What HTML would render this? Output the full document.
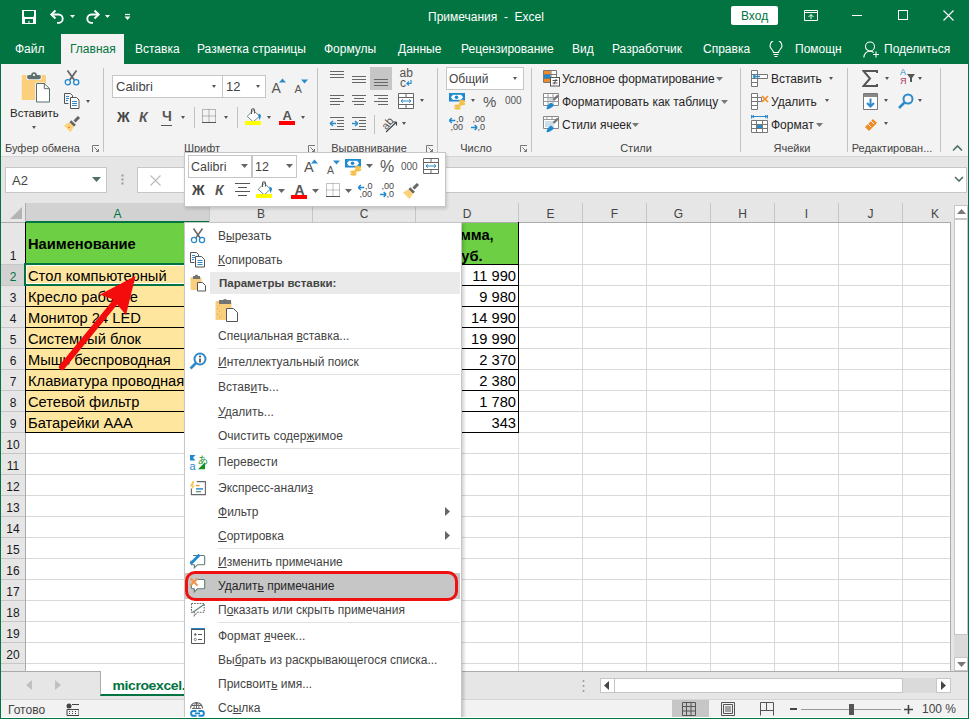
<!DOCTYPE html>
<html><head><meta charset="utf-8">
<style>
*{box-sizing:border-box;margin:0;padding:0}
html,body{width:969px;height:719px;overflow:hidden;background:#fff;font-family:"Liberation Sans",sans-serif;font-size:12px;color:#262626}
.a{position:absolute}
.t{position:absolute;white-space:pre;line-height:14px}
#title{left:0;top:0;width:969px;height:64px;background:#027442}
#ribbon{left:0;top:64px;width:969px;height:93px;background:#f3f3f3;border-bottom:1px solid #d5d5d5}
#fbar{left:0;top:157px;width:969px;height:46px;background:#e6e6e6}
.vsep{position:absolute;width:1px;background:#c2c2c2}
.tab{position:absolute;top:42px;color:#fff;white-space:pre;line-height:14px}
.lbl{position:absolute;top:141px;color:#444;white-space:pre;line-height:14px;font-size:11px;transform:translateX(-50%)}
.dd{position:absolute;width:0;height:0;border-left:2.5px solid transparent;border-right:2.5px solid transparent;border-top:3px solid #555}
#grid{left:0;top:203px;width:969px;height:468px;background:#fff}
.ch{position:absolute;top:203px;height:19px;background:#e6e6e6;border-right:1px solid #cfcfcf;border-bottom:1px solid #bdbdbd;text-align:center;line-height:19px;font-size:14px;color:#444}
.rhx{position:absolute;left:1px;width:24px;background:#e6e6e6;border-bottom:1px solid #cfcfcf;border-right:1px solid #bdbdbd;text-align:center;font-size:14px;color:#444}
.hl{position:absolute;height:1px;background:#d9d9d9}
.vl{position:absolute;width:1px;background:#d9d9d9}
.cell{position:absolute;font-size:14.7px;color:#000;white-space:pre}
#menu{left:184px;top:222px;width:278px;height:510px;background:#fff;border:1px solid #c6c6c6;box-shadow:2px 2px 3px rgba(0,0,0,.18)}
.mi{position:absolute;color:#444;white-space:pre;line-height:14px}
u{text-decoration:underline;text-underline-offset:1px}
.msep{position:absolute;left:34px;width:242px;height:1px;background:#e1e1e1}
#mini{left:184px;top:152px;width:262px;height:55px;background:#fff;border:1px solid #c6c6c6;box-shadow:1px 2px 3px rgba(0,0,0,.15)}
#status{left:0;top:699px;width:969px;height:20px;background:#f2f2f2;border-top:1px solid #d4d4d4}
</style></head><body>
<!-- title bar -->
<div id="title" class="a"></div>
<div class="t" style="left:428px;top:10px;color:#fff">Примечания  -  Excel</div>
<div class="a" style="left:731px;top:6px;width:47px;height:19px;background:#fff;border-radius:2px"></div>
<div class="t" style="left:741px;top:9px;color:#027442">Вход</div>
<!-- QAT -->
<svg class="a" style="left:22px;top:10px" width="14" height="14" viewBox="0 0 14 14">
 <rect x="0" y="0" width="14" height="14" fill="#fff"/>
 <path d="M2 1h10v5.2l-1 0.8H3l-1-0.8z" fill="#027442"/>
 <path d="M3 9h8v4H7.5v-2h-1v2H3z" fill="#027442"/>
</svg>
<svg class="a" style="left:49px;top:9px" width="17" height="15" viewBox="0 0 17 15">
 <path d="M3 5.5h6.5a4.2 4.2 0 0 1 0 8.4H8" fill="none" stroke="#fff" stroke-width="1.9"/>
 <path d="M6.5 1.5L2.3 5.5l4.2 4" fill="none" stroke="#fff" stroke-width="1.9"/>
</svg>
<svg class="a" style="left:70px;top:15px" width="5" height="3"><path d="M0 0h5L2.5 3z" fill="#fff"/></svg>
<svg class="a" style="left:84px;top:9px" width="17" height="15" viewBox="0 0 17 15">
 <path d="M14 5.5H7.5a4.2 4.2 0 0 0 0 8.4H9" fill="none" stroke="#fff" stroke-width="1.9"/>
 <path d="M10.5 1.5l4.2 4-4.2 4" fill="none" stroke="#fff" stroke-width="1.9"/>
</svg>
<svg class="a" style="left:105px;top:15px" width="5" height="3"><path d="M0 0h5L2.5 3z" fill="#fff"/></svg>
<svg class="a" style="left:124px;top:13px" width="7" height="8"><path d="M1 1.5h5" stroke="#fff" stroke-width="1.2"/><path d="M0.5 3.5h6L3.5 7z" fill="#fff"/></svg>
<!-- window controls -->
<svg class="a" style="left:804px;top:10px" width="14" height="11" viewBox="0 0 14 11">
 <path d="M0.5 0.5h13v10h-13zM0.5 2.5h13" fill="none" stroke="#fff"/>
 <path d="M7 9V4.5M4.5 7L7 4.5 9.5 7" fill="none" stroke="#fff"/>
</svg>
<div class="a" style="left:852px;top:15px;width:10px;height:1px;background:#fff"></div>
<div class="a" style="left:898px;top:10px;width:10px;height:10px;border:1px solid #fff"></div>
<svg class="a" style="left:943px;top:10px" width="11" height="11" viewBox="0 0 11 11"><path d="M0.5 0.5l10 10M10.5 0.5l-10 10" stroke="#fff" stroke-width="1.1"/></svg>
<svg class="a" style="left:769px;top:41px" width="14" height="17" viewBox="0 0 14 17">
 <path d="M4.5 11.5C4.5 9 1 7.5 1 5a6 6 0 0 1 12 0c0 2.5-3.5 4-3.5 6.5z" fill="none" stroke="#fff" stroke-width="1.1"/>
 <path d="M4.5 13.5h5M5.5 15.5h3" stroke="#fff" stroke-width="1.1"/>
</svg>
<svg class="a" style="left:863px;top:41px" width="17" height="17" viewBox="0 0 17 17">
 <circle cx="7" cy="5.5" r="4.5" fill="none" stroke="#fff" stroke-width="1.1"/>
 <path d="M0.8 16.5c0.5-4 3-6.3 6.2-6.3 1.5 0 2.7 0.5 3.6 1.3" fill="none" stroke="#fff" stroke-width="1.1"/>
 <path d="M13 10.5v6M10 13.5h6" stroke="#fff" stroke-width="1.1"/>
</svg>
<!-- tabs -->
<div class="a" style="left:61px;top:34px;width:63px;height:30px;background:#f3f3f3"></div>
<div class="tab" style="left:15px">Файл</div>
<div class="tab" style="left:70px;color:#027442">Главная</div>
<div class="tab" style="left:135px">Вставка</div>
<div class="tab" style="left:197px">Разметка страницы</div>
<div class="tab" style="left:324px">Формулы</div>
<div class="tab" style="left:398px">Данные</div>
<div class="tab" style="left:461px">Рецензирование</div>
<div class="tab" style="left:572px">Вид</div>
<div class="tab" style="left:612px">Разработчик</div>
<div class="tab" style="left:703px">Справка</div>
<div class="tab" style="left:795px">Помощн</div>
<div class="tab" style="left:884px">Поделиться</div>
<!-- ribbon -->
<div id="ribbon" class="a"></div>
<!-- clipboard group -->
<svg class="a" style="left:20px;top:71px" width="32" height="33" viewBox="0 0 32 33">
 <rect x="1.8" y="3.9" width="24.2" height="25" rx="0.8" fill="#fbcf7c"/>
 <rect x="6.2" y="3.4" width="15.6" height="5.6" rx="2.8" fill="#f3f3f3"/>
 <circle cx="14" cy="3.8" r="3.6" fill="#f3f3f3"/>
 <rect x="7" y="4" width="14" height="4.2" rx="2.1" fill="#5f6f6b"/>
 <circle cx="14" cy="4" r="2.8" fill="#5f6f6b"/>
 <circle cx="14" cy="4" r="1.1" fill="#fff"/>
 <circle cx="15.5" cy="12.3" r="0.7" fill="#f07030"/>
 <path d="M16 12.5h8.3l5.2 5.2V31H16z" fill="#fff" stroke="#f3f3f3" stroke-width="2"/>
 <path d="M16.5 12.5h7.8l5.2 5.2v13.3h-13z" fill="#fff" stroke="#5a6e6a" stroke-width="1"/>
 <path d="M24.3 12.5v5.2h5.2" fill="none" stroke="#5a6e6a" stroke-width="1"/>
</svg>
<div class="t" style="left:10px;top:106px;color:#262626;font-size:11.5px">Вставить</div>
<div class="dd" style="left:32px;top:126px"></div>
<svg class="a" style="left:64px;top:70px" width="16" height="16" viewBox="0 0 16 16">
 <path d="M3.5 0.5l6.8 9.5M12.5 0.5L5.7 10" stroke="#666" stroke-width="1.8" fill="none"/>
 <circle cx="3.8" cy="12.3" r="2.6" fill="none" stroke="#1e88d0" stroke-width="1.3"/>
 <circle cx="12.2" cy="12.3" r="2.6" fill="none" stroke="#1e88d0" stroke-width="1.3"/>
</svg>
<svg class="a" style="left:64px;top:93px" width="16" height="16" viewBox="0 0 16 16">
 <path d="M0.5 0.5h6l2 2v2" fill="none" stroke="#555"/><path d="M0.5 0.5v10h4" fill="none" stroke="#555"/>
 <path d="M2 3.5h3M2 5.5h3M2 7.5h2" stroke="#2d8bc9"/>
 <path d="M6.5 4.5h6l2.5 2.5v8.5h-8.5z" fill="#fff" stroke="#555"/>
 <path d="M8 8.5h5M8 10.5h5M8 12.5h5" stroke="#2d8bc9"/>
</svg>
<div class="dd" style="left:86px;top:100px"></div>
<svg class="a" style="left:63px;top:116px" width="18" height="17" viewBox="0 0 18 17">
 <path d="M11.5 5.5l4.5-4.5" stroke="#666" stroke-width="3"/>
 <path d="M8.3 4.2l4.6 4.6-2 2-4.6-4.6z" fill="#666"/>
 <path d="M6.3 6.2l4.6 4.6-3.4 5.4-6.6-6.6z" fill="#fcd27a"/>
 <circle cx="6" cy="11.5" r="0.7" fill="#e05020"/>
</svg>
<div class="t" style="left:5px;top:141px;color:#444;font-size:11px">Буфер обмена</div>
<svg class="a" style="left:92px;top:145px" width="8" height="8" viewBox="0 0 8 8"><path d="M0.5 7V0.5H7M2.5 2.5l4 4M4 6.5h2.5V4" fill="none" stroke="#777"/></svg>
<div class="vsep" style="left:103px;top:68px;height:84px"></div>
<!-- font group -->
<div class="a" style="left:112px;top:75px;width:111px;height:23px;background:#fff;border:1px solid #c6c6c6"></div>
<div class="t" style="left:116px;top:80px;color:#444;font-size:13px">Calibri</div>
<div class="dd" style="left:212px;top:85px"></div>
<div class="a" style="left:222px;top:75px;width:44px;height:23px;background:#fff;border:1px solid #c6c6c6"></div>
<div class="t" style="left:226px;top:80px;color:#444;font-size:13px">12</div>
<div class="dd" style="left:256px;top:85px"></div>
<div class="t" style="left:271.5px;top:80px;font-size:14px;color:#555;line-height:16px">A</div>
<svg class="a" style="left:279px;top:78px" width="7" height="5"><path d="M0 4.5L3.5 0.5 7 4.5z" fill="#2d8bc9"/></svg>
<div class="t" style="left:294.5px;top:83px;font-size:11px;color:#555;line-height:13px">A</div>
<svg class="a" style="left:301px;top:79px" width="7" height="5"><path d="M0 0.5L3.5 4.5 7 0.5z" fill="#2d8bc9"/></svg>
<div class="t" style="left:117px;top:109px;font-size:14px;font-weight:bold;color:#444;line-height:16px">Ж</div>
<div class="t" style="left:139px;top:109px;font-size:14px;font-weight:bold;font-style:italic;color:#555;line-height:16px">К</div>
<div class="t" style="left:162px;top:108px;font-size:14px;font-weight:bold;color:#555;line-height:16px">Ч</div>
<div class="a" style="left:161px;top:125px;width:11px;height:1px;background:#555"></div>
<div class="dd" style="left:181px;top:116px"></div>
<div class="vsep" style="left:194px;top:107px;height:21px"></div>
<svg class="a" style="left:202px;top:109px" width="14" height="14" viewBox="0 0 14 14"><path d="M0.5 0.5h13v13h-13zM7 0.5v13M0.5 7h13" fill="none" stroke="#777" stroke-dasharray="1 1"/><path d="M0 13.5h14" stroke="#555"/></svg>
<div class="dd" style="left:224px;top:116px"></div>
<div class="vsep" style="left:237px;top:107px;height:21px"></div>
<svg class="a" style="left:245px;top:108px" width="17" height="17" viewBox="0 0 17 17">
 <path d="M2.2 8.3L8.3 2.3l6.2 5.9-6.4 5.6z" fill="#fff" stroke="#5f7f7a" stroke-width="0.9"/>
 <path d="M6.5 6V2.3a1.5 1.5 0 0 1 3 0V5.5" fill="none" stroke="#555" stroke-width="1.1"/>
 <path d="M13.5 5.5c1.5 0.5 2.5 1.5 2.5 2.5 0 1-0.8 2.5-1.6 4l-0.9-4z" fill="#1e88d0"/>
 <rect x="0" y="13" width="16" height="4" fill="#ffff00"/>
</svg>
<div class="dd" style="left:267px;top:116px"></div>
<div class="t" style="left:282.5px;top:109px;font-size:13px;font-weight:bold;color:#555;line-height:14px">A</div>
<div class="a" style="left:279px;top:121px;width:16px;height:4px;background:#f00"></div>
<div class="dd" style="left:301px;top:116px"></div>
<div class="lbl" style="left:202px">Шрифт</div>
<svg class="a" style="left:308px;top:145px" width="8" height="8" viewBox="0 0 8 8"><path d="M0.5 7V0.5H7M2.5 2.5l4 4M4 6.5h2.5V4" fill="none" stroke="#777"/></svg>
<div class="vsep" style="left:317px;top:68px;height:84px"></div>
<!-- alignment group -->
<svg class="a" style="left:328px;top:67px" width="64" height="23" viewBox="0 0 64 23">
 <path d="M2 4.5h14M2 7.5h14M2 10.5h14" stroke="#666"/>
 <path d="M24 9.5h14M24 12.5h14M24 15.5h14" stroke="#666"/>
 <rect x="42" y="0" width="22" height="23" fill="#c6c6c6"/>
 <path d="M46 12.5h14M46 15.5h14M46 18.5h14" stroke="#666"/>
</svg>
<div class="t" style="left:399.5px;top:68px;font-size:12px;color:#555;line-height:10px">ab</div>
<div class="t" style="left:400px;top:78px;font-size:12px;color:#555;line-height:10px">c</div>
<svg class="a" style="left:406px;top:80px" width="6" height="6"><path d="M5 0v3.5H1M3 1.5L0.8 3.5 3 5.5" fill="none" stroke="#1e88d0" stroke-width="1.1"/></svg>
<svg class="a" style="left:328px;top:94px" width="64" height="14" viewBox="0 0 64 14">
 <path d="M2 1.5h14M2 4.5h10M2 7.5h14M2 10.5h10" stroke="#666"/>
 <path d="M24 1.5h14M26 4.5h10M24 7.5h14M26 10.5h10" stroke="#666"/>
 <path d="M46 1.5h14M50 4.5h10M46 7.5h14M50 10.5h10" stroke="#666"/>
</svg>
<svg class="a" style="left:398px;top:93px" width="16" height="16" viewBox="0 0 16 16">
 <path d="M0.5 0.5h15v15h-15z" fill="#fff" stroke="#666"/>
 <path d="M0.5 4.5h15M0.5 11.5h15M8 0.5v4M8 11.5v4" stroke="#666"/>
 <path d="M3 8h10M3 8l2-1.7M3 8l2 1.7M13 8l-2-1.7M13 8l-2 1.7" stroke="#2d8bc9" fill="none"/>
</svg>
<div class="dd" style="left:420px;top:99px"></div>
<svg class="a" style="left:328px;top:117px" width="64" height="14" viewBox="0 0 64 14">
 <path d="M2 0.5h14M9 3.5h7M9 6.5h7M9 9.5h7M2 12.5h14" stroke="#666"/>
 <path d="M2 6.5h6M2 6.5l3-2.5M2 6.5l3 2.5" stroke="#2d8bc9" stroke-width="1.4" fill="none"/>
 <path d="M24 0.5h14M31 3.5h7M31 6.5h7M31 9.5h7M24 12.5h14" stroke="#666"/>
 <path d="M24 6.5h6M30 6.5l-3-2.5M30 6.5l-3 2.5" stroke="#2d8bc9" stroke-width="1.4" fill="none"/>
</svg>
<div class="vsep" style="left:374px;top:115px;height:19px"></div>
<svg class="a" style="left:381px;top:115px" width="18" height="18" viewBox="0 0 18 18">
 <text x="1" y="12" font-family="Liberation Sans" font-size="11" fill="#555" transform="rotate(-50 7 9)">ab</text>
 <path d="M5 17L15.5 7M15.5 7h-3.5M15.5 7v3.5" stroke="#444" stroke-width="1.1" fill="none"/>
</svg>
<div class="dd" style="left:402px;top:122px"></div>
<div class="lbl" style="left:369px">Выравнивание</div>
<svg class="a" style="left:426px;top:145px" width="8" height="8" viewBox="0 0 8 8"><path d="M0.5 7V0.5H7M2.5 2.5l4 4M4 6.5h2.5V4" fill="none" stroke="#777"/></svg>
<div class="vsep" style="left:437px;top:68px;height:84px"></div>
<!-- number group -->
<div class="a" style="left:446px;top:67px;width:78px;height:23px;background:#fff;border:1px solid #c6c6c6"></div>
<div class="t" style="left:449px;top:72px;color:#444">Общий</div>
<div class="dd" style="left:513px;top:77px"></div>
<svg class="a" style="left:449px;top:93px" width="17" height="17" viewBox="0 0 17 17">
 <rect x="0" y="0" width="16" height="8.5" fill="#1e88d0"/>
 <path d="M2 1.8h12v5H2z" fill="#fff"/>
 <circle cx="7.5" cy="4.3" r="1.8" fill="#1e88d0"/>
 <path d="M2 1.8h2.2L2 4zM14 1.8v2.2L11.8 1.8zM2 6.8V4.6L4.2 6.8zM14 6.8h-2.2L14 4.6z" fill="#1e88d0"/>
 <ellipse cx="13" cy="8.5" rx="3.3" ry="1.4" fill="#f5c04a"/>
 <ellipse cx="13" cy="11" rx="3.3" ry="1.4" fill="#f5c04a"/>
 <ellipse cx="8.5" cy="12.8" rx="3.3" ry="1.4" fill="#f5c04a"/>
 <ellipse cx="8.5" cy="15.3" rx="3.3" ry="1.4" fill="#f5c04a"/>
</svg>
<div class="dd" style="left:471px;top:99px"></div>
<div class="t" style="left:483px;top:94px;font-size:15px;color:#555;line-height:16px">%</div>
<div class="t" style="left:505px;top:96px;font-size:10px;color:#555;line-height:10px">000</div>
<svg class="a" style="left:447px;top:115px" width="42" height="18" viewBox="0 0 42 18">
 <text x="9" y="7.3" font-family="Liberation Sans" font-size="9" fill="#444">,0</text>
 <text x="3.5" y="14.8" font-family="Liberation Sans" font-size="9" fill="#444">,00</text>
 <path d="M2.3 5.5h6M2.3 5.5l2.5-2.5M2.3 5.5l2.5 2.5" stroke="#1e88d0" fill="none" stroke-width="1.4"/>
 <text x="25.5" y="7.3" font-family="Liberation Sans" font-size="9" fill="#444">,00</text>
 <text x="30.5" y="14.8" font-family="Liberation Sans" font-size="9" fill="#444">,0</text>
 <path d="M24 12.5h6.2M30.2 12.5l-2.5-2.5M30.2 12.5l-2.5 2.5" stroke="#1e88d0" fill="none" stroke-width="1.4"/>
</svg>
<div class="lbl" style="left:476px">Число</div>
<svg class="a" style="left:520px;top:145px" width="8" height="8" viewBox="0 0 8 8"><path d="M0.5 7V0.5H7M2.5 2.5l4 4M4 6.5h2.5V4" fill="none" stroke="#777"/></svg>
<div class="vsep" style="left:531px;top:68px;height:84px"></div>
<!-- styles group -->
<svg class="a" style="left:542px;top:69px" width="18" height="18" viewBox="0 0 18 18">
 <path d="M1.5 1.5h13v12h-13z" fill="#fff" stroke="#777"/>
 <rect x="2" y="2" width="6.5" height="3.5" fill="#f08a24"/>
 <rect x="2" y="6" width="6.5" height="3.5" fill="#1e88d0"/>
 <rect x="2" y="10" width="6.5" height="3" fill="#f08a24"/>
 <path d="M9 1.5v12M1.5 5.5h13M1.5 9.5h13" stroke="#777"/>
 <rect x="8.5" y="8.5" width="9" height="8.5" fill="#fff" stroke="#555"/>
 <path d="M10.5 11.5h5M10.5 14h5M14.2 10l-2.2 5.5" stroke="#444" stroke-width="0.9"/>
</svg>
<svg class="a" style="left:542px;top:92px" width="18" height="18" viewBox="0 0 18 18">
 <path d="M1.5 1.5h15v12h-15z" fill="#fff" stroke="#888"/>
 <path d="M1.5 5.5h15M1.5 9.5h15M6 1.5v12M11 1.5v12" stroke="#999"/>
 <rect x="6.5" y="6" width="4" height="3" fill="#d0d8de"/>
 <path d="M11.5 8l4.5-4.5" stroke="#777" stroke-width="2.4"/>
 <path d="M4.5 17.3c0-3 2-5.3 4.5-6.8l3 2.5c-1.5 2.5-4.5 4.3-7.5 4.3z" fill="#1e88d0"/>
</svg>
<div class="t" style="left:562px;top:72px;color:#262626">Условное форматирование</div>
<svg class="a" style="left:716px;top:77px" width="7" height="4"><path d="M0 0h7L3.5 4z" fill="#777"/></svg>
<div class="t" style="left:562px;top:95px;color:#262626">Форматировать как таблицу</div>
<svg class="a" style="left:721px;top:100px" width="7" height="4"><path d="M0 0h7L3.5 4z" fill="#777"/></svg>
<svg class="a" style="left:542px;top:115px" width="18" height="18" viewBox="0 0 18 18">
 <path d="M1.5 1.5h15v12h-15z" fill="#fff" stroke="#888"/>
 <path d="M1.5 4.5h15M5 1.5v3M10 1.5v3" stroke="#999"/>
 <rect x="3" y="6" width="9" height="6" fill="#cfdde8"/>
 <path d="M11.5 8l4.5-4.5" stroke="#777" stroke-width="2.4"/>
 <path d="M4.5 17.3c0-3 2-5.3 4.5-6.8l3 2.5c-1.5 2.5-4.5 4.3-7.5 4.3z" fill="#1e88d0"/>
</svg>
<div class="t" style="left:562px;top:118px;color:#262626">Стили ячеек</div>
<svg class="a" style="left:632px;top:123px" width="7" height="4"><path d="M0 0h7L3.5 4z" fill="#777"/></svg>
<div class="lbl" style="left:636px">Стили</div>
<div class="vsep" style="left:740px;top:68px;height:84px"></div>
<!-- cells group -->
<svg class="a" style="left:751px;top:70px" width="18" height="17" viewBox="0 0 18 17">
 <path d="M0.5 0.5h6v4h-6zM0.5 4.5h6v4h-6zM0.5 8.5h6v4h-6zM0.5 12.5h6v4h-6zM6.5 4.5h10v4h-10z" fill="#fff" stroke="#777"/>
 <path d="M2 6.5h7M2 6.5l2.5-2M2 6.5l2.5 2" stroke="#2d8bc9" stroke-width="1.4" fill="none"/>
</svg>
<div class="t" style="left:771px;top:72px;color:#262626">Вставить</div>
<div class="dd" style="left:829px;top:77px"></div>
<svg class="a" style="left:751px;top:93px" width="18" height="17" viewBox="0 0 18 17">
 <path d="M0.5 0.5h6v4h-6zM0.5 4.5h6v4h-6zM0.5 8.5h6v4h-6zM0.5 12.5h6v4h-6zM6.5 4.5h4v4h-4z" fill="#fff" stroke="#777"/>
 <path d="M11 3l6 6M17 3l-6 6" stroke="#f08a24" stroke-width="1.6"/>
</svg>
<div class="t" style="left:771px;top:95px;color:#262626">Удалить</div>
<div class="dd" style="left:825px;top:99px"></div>
<svg class="a" style="left:751px;top:115px" width="18" height="18" viewBox="0 0 18 18">
 <path d="M1 1.5h15M1 1.5l2-1.5M1 1.5l2 1.5M16 1.5l-2-1.5M16 1.5l-2 1.5M0.5 0v3.5M16.5 0v3.5" stroke="#2d8bc9" fill="none"/>
 <path d="M0.5 5.5h16v12h-16zM0.5 9.5h16M0.5 13.5h16M5.5 5.5v12M11.5 5.5v12" fill="#fff" stroke="#777"/>
 <rect x="6" y="10" width="5" height="3" fill="#2d8bc9"/>
</svg>
<div class="t" style="left:771px;top:118px;color:#262626">Формат</div>
<svg class="a" style="left:816px;top:123px" width="7" height="4"><path d="M0 0h7L3.5 4z" fill="#777"/></svg>
<div class="lbl" style="left:792px">Ячейки</div>
<div class="vsep" style="left:847px;top:68px;height:84px"></div>
<!-- editing group -->
<svg class="a" style="left:862px;top:70px" width="16" height="17" viewBox="0 0 16 17"><path d="M15 3V1H1.5l6.5 7.5-6.5 7.5H15v-2" fill="none" stroke="#555" stroke-width="2"/></svg>
<div class="dd" style="left:885px;top:77px"></div>
<div class="t" style="left:900px;top:68px;font-size:9px;color:#2d8bc9;line-height:9px">A</div>
<div class="t" style="left:900px;top:77px;font-size:9px;color:#b03060;line-height:9px">Я</div>
<svg class="a" style="left:907px;top:74px" width="8" height="8"><path d="M0 0h8L5 4v4H3V4z" fill="#555"/></svg>
<div class="dd" style="left:918px;top:77px"></div>
<svg class="a" style="left:863px;top:93px" width="15" height="17" viewBox="0 0 15 17">
 <path d="M0.5 0.5h14v16h-14z" fill="#fff" stroke="#777"/><rect x="1" y="1" width="13" height="3" fill="#888"/>
 <path d="M7.5 5.5v8M4 10l3.5 3.5L11 10" stroke="#2d8bc9" stroke-width="2" fill="none"/>
</svg>
<div class="dd" style="left:884px;top:99px"></div>
<svg class="a" style="left:898px;top:93px" width="16" height="16" viewBox="0 0 16 16">
 <circle cx="10" cy="6" r="4.5" fill="none" stroke="#2d8bc9" stroke-width="2"/><path d="M7 9l-6 6" stroke="#2d8bc9" stroke-width="2.5"/>
</svg>
<div class="dd" style="left:918px;top:99px"></div>
<svg class="a" style="left:863px;top:116px" width="16" height="16" viewBox="0 0 16 16">
 <path d="M2 11l8-8 4 4-8 8z" fill="#f08a24"/><path d="M5 8l3 3M8 5l3 3" stroke="#f3f3f3" stroke-width="1"/>
</svg>
<div class="dd" style="left:884px;top:122px"></div>
<div class="lbl" style="left:892px">Редактирован...</div>
<div class="vsep" style="left:940px;top:68px;height:84px"></div>
<svg class="a" style="left:952px;top:144px" width="11" height="8"><path d="M1 6.5l4.5-4.5L10 6.5" fill="none" stroke="#4f6f68" stroke-width="1.6"/></svg>
<div id="fbar" class="a"></div>
<div class="a" style="left:5px;top:167px;width:102px;height:26px;background:#fff;border:1px solid #c6c6c6"></div>
<div class="t" style="left:12px;top:174px;font-size:13px;color:#444">A2</div>
<svg class="a" style="left:92px;top:177px" width="9" height="5"><path d="M0 0h9L4.5 5z" fill="#4f6f68"/></svg>
<svg class="a" style="left:121px;top:174px" width="3" height="12"><rect x="0.5" y="0.5" width="2" height="2" fill="#999"/><rect x="0.5" y="4.5" width="2" height="2" fill="#999"/><rect x="0.5" y="8.5" width="2" height="2" fill="#999"/></svg>
<div class="a" style="left:137px;top:167px;width:830px;height:26px;background:#fff;border:1px solid #c6c6c6"></div>
<svg class="a" style="left:150px;top:175px" width="11" height="11"><path d="M0.5 0.5l10 10M10.5 0.5l-10 10" stroke="#bbb" stroke-width="1.2"/></svg>
<svg class="a" style="left:954px;top:176px" width="10" height="6"><path d="M1 1l4 4 4-4" fill="none" stroke="#4f6f68" stroke-width="1.6"/></svg>
<!-- grid -->
<div id="grid" class="a"></div>
<div class="a" style="left:1px;top:203px;width:950px;height:19px;background:#e6e6e6"></div>
<div class="a" style="left:26px;top:203px;width:183px;height:19px;background:#d2d2d2"></div>
<div class="a" style="left:1px;top:222px;width:950px;height:1px;background:#ababab"></div>
<div class="a" style="left:26px;top:221px;width:184px;height:2px;background:#027442"></div>
<svg class="a" style="left:10px;top:207px" width="12" height="12"><path d="M12 0V12H0z" fill="#b4b4b4"/></svg>
<div class="a" style="left:25px;top:203px;width:1px;height:20px;background:#ababab"></div>
<div class="t" style="left:26px;top:207px;width:183px;text-align:center;color:#027442">A</div>
<div class="t" style="left:210px;top:207px;width:102px;text-align:center;color:#444">B</div>
<div class="a" style="left:209px;top:203px;width:1px;height:19px;background:#c6c6c6"></div>
<div class="t" style="left:313px;top:207px;width:102px;text-align:center;color:#444">C</div>
<div class="a" style="left:312px;top:203px;width:1px;height:19px;background:#c6c6c6"></div>
<div class="t" style="left:416px;top:207px;width:102px;text-align:center;color:#444">D</div>
<div class="a" style="left:415px;top:203px;width:1px;height:19px;background:#c6c6c6"></div>
<div class="t" style="left:519px;top:207px;width:63px;text-align:center;color:#444">E</div>
<div class="a" style="left:518px;top:203px;width:1px;height:19px;background:#c6c6c6"></div>
<div class="t" style="left:583px;top:207px;width:63px;text-align:center;color:#444">F</div>
<div class="a" style="left:582px;top:203px;width:1px;height:19px;background:#c6c6c6"></div>
<div class="t" style="left:647px;top:207px;width:63px;text-align:center;color:#444">G</div>
<div class="a" style="left:646px;top:203px;width:1px;height:19px;background:#c6c6c6"></div>
<div class="t" style="left:711px;top:207px;width:63px;text-align:center;color:#444">H</div>
<div class="a" style="left:710px;top:203px;width:1px;height:19px;background:#c6c6c6"></div>
<div class="t" style="left:775px;top:207px;width:63px;text-align:center;color:#444">I</div>
<div class="a" style="left:774px;top:203px;width:1px;height:19px;background:#c6c6c6"></div>
<div class="t" style="left:839px;top:207px;width:63px;text-align:center;color:#444">J</div>
<div class="a" style="left:838px;top:203px;width:1px;height:19px;background:#c6c6c6"></div>
<div class="t" style="left:903px;top:207px;width:64px;text-align:center;color:#444">K</div>
<div class="a" style="left:902px;top:203px;width:1px;height:19px;background:#c6c6c6"></div>
<div class="a" style="left:1px;top:223px;width:24px;height:448px;background:#e6e6e6"></div>
<div class="a" style="left:25px;top:223px;width:1px;height:448px;background:#ababab"></div>
<div class="a" style="left:1px;top:264px;width:24px;height:1px;background:#c6c6c6"></div>
<div class="t" style="left:1px;top:249px;width:24px;text-align:center;color:#1a1a1a">1</div>
<div class="a" style="left:1px;top:265px;width:24px;height:20px;background:#d2d2d2"></div>
<div class="a" style="left:1px;top:285px;width:24px;height:1px;background:#c6c6c6"></div>
<div class="t" style="left:1px;top:270px;width:24px;text-align:center;color:#027442">2</div>
<div class="a" style="left:1px;top:306px;width:24px;height:1px;background:#c6c6c6"></div>
<div class="t" style="left:1px;top:291px;width:24px;text-align:center;color:#1a1a1a">3</div>
<div class="a" style="left:1px;top:327px;width:24px;height:1px;background:#c6c6c6"></div>
<div class="t" style="left:1px;top:312px;width:24px;text-align:center;color:#1a1a1a">4</div>
<div class="a" style="left:1px;top:348px;width:24px;height:1px;background:#c6c6c6"></div>
<div class="t" style="left:1px;top:333px;width:24px;text-align:center;color:#1a1a1a">5</div>
<div class="a" style="left:1px;top:369px;width:24px;height:1px;background:#c6c6c6"></div>
<div class="t" style="left:1px;top:354px;width:24px;text-align:center;color:#1a1a1a">6</div>
<div class="a" style="left:1px;top:390px;width:24px;height:1px;background:#c6c6c6"></div>
<div class="t" style="left:1px;top:375px;width:24px;text-align:center;color:#1a1a1a">7</div>
<div class="a" style="left:1px;top:411px;width:24px;height:1px;background:#c6c6c6"></div>
<div class="t" style="left:1px;top:396px;width:24px;text-align:center;color:#1a1a1a">8</div>
<div class="a" style="left:1px;top:432px;width:24px;height:1px;background:#c6c6c6"></div>
<div class="t" style="left:1px;top:417px;width:24px;text-align:center;color:#1a1a1a">9</div>
<div class="a" style="left:1px;top:453px;width:24px;height:1px;background:#c6c6c6"></div>
<div class="t" style="left:1px;top:438px;width:24px;text-align:center;color:#1a1a1a">10</div>
<div class="a" style="left:1px;top:474px;width:24px;height:1px;background:#c6c6c6"></div>
<div class="t" style="left:1px;top:459px;width:24px;text-align:center;color:#1a1a1a">11</div>
<div class="a" style="left:1px;top:495px;width:24px;height:1px;background:#c6c6c6"></div>
<div class="t" style="left:1px;top:480px;width:24px;text-align:center;color:#1a1a1a">12</div>
<div class="a" style="left:1px;top:516px;width:24px;height:1px;background:#c6c6c6"></div>
<div class="t" style="left:1px;top:501px;width:24px;text-align:center;color:#1a1a1a">13</div>
<div class="a" style="left:1px;top:537px;width:24px;height:1px;background:#c6c6c6"></div>
<div class="t" style="left:1px;top:522px;width:24px;text-align:center;color:#1a1a1a">14</div>
<div class="a" style="left:1px;top:558px;width:24px;height:1px;background:#c6c6c6"></div>
<div class="t" style="left:1px;top:543px;width:24px;text-align:center;color:#1a1a1a">15</div>
<div class="a" style="left:1px;top:579px;width:24px;height:1px;background:#c6c6c6"></div>
<div class="t" style="left:1px;top:564px;width:24px;text-align:center;color:#1a1a1a">16</div>
<div class="a" style="left:1px;top:600px;width:24px;height:1px;background:#c6c6c6"></div>
<div class="t" style="left:1px;top:585px;width:24px;text-align:center;color:#1a1a1a">17</div>
<div class="a" style="left:1px;top:621px;width:24px;height:1px;background:#c6c6c6"></div>
<div class="t" style="left:1px;top:606px;width:24px;text-align:center;color:#1a1a1a">18</div>
<div class="a" style="left:1px;top:642px;width:24px;height:1px;background:#c6c6c6"></div>
<div class="t" style="left:1px;top:627px;width:24px;text-align:center;color:#1a1a1a">19</div>
<div class="a" style="left:1px;top:663px;width:24px;height:1px;background:#c6c6c6"></div>
<div class="t" style="left:1px;top:648px;width:24px;text-align:center;color:#1a1a1a">20</div>
<div class="a" style="left:26px;top:264px;width:925px;height:1px;background:#d9d9d9"></div>
<div class="a" style="left:26px;top:285px;width:925px;height:1px;background:#d9d9d9"></div>
<div class="a" style="left:26px;top:306px;width:925px;height:1px;background:#d9d9d9"></div>
<div class="a" style="left:26px;top:327px;width:925px;height:1px;background:#d9d9d9"></div>
<div class="a" style="left:26px;top:348px;width:925px;height:1px;background:#d9d9d9"></div>
<div class="a" style="left:26px;top:369px;width:925px;height:1px;background:#d9d9d9"></div>
<div class="a" style="left:26px;top:390px;width:925px;height:1px;background:#d9d9d9"></div>
<div class="a" style="left:26px;top:411px;width:925px;height:1px;background:#d9d9d9"></div>
<div class="a" style="left:26px;top:432px;width:925px;height:1px;background:#d9d9d9"></div>
<div class="a" style="left:26px;top:453px;width:925px;height:1px;background:#d9d9d9"></div>
<div class="a" style="left:26px;top:474px;width:925px;height:1px;background:#d9d9d9"></div>
<div class="a" style="left:26px;top:495px;width:925px;height:1px;background:#d9d9d9"></div>
<div class="a" style="left:26px;top:516px;width:925px;height:1px;background:#d9d9d9"></div>
<div class="a" style="left:26px;top:537px;width:925px;height:1px;background:#d9d9d9"></div>
<div class="a" style="left:26px;top:558px;width:925px;height:1px;background:#d9d9d9"></div>
<div class="a" style="left:26px;top:579px;width:925px;height:1px;background:#d9d9d9"></div>
<div class="a" style="left:26px;top:600px;width:925px;height:1px;background:#d9d9d9"></div>
<div class="a" style="left:26px;top:621px;width:925px;height:1px;background:#d9d9d9"></div>
<div class="a" style="left:26px;top:642px;width:925px;height:1px;background:#d9d9d9"></div>
<div class="a" style="left:26px;top:663px;width:925px;height:1px;background:#d9d9d9"></div>
<div class="a" style="left:209px;top:223px;width:1px;height:448px;background:#d9d9d9"></div>
<div class="a" style="left:312px;top:223px;width:1px;height:448px;background:#d9d9d9"></div>
<div class="a" style="left:415px;top:223px;width:1px;height:448px;background:#d9d9d9"></div>
<div class="a" style="left:518px;top:223px;width:1px;height:448px;background:#d9d9d9"></div>
<div class="a" style="left:582px;top:223px;width:1px;height:448px;background:#d9d9d9"></div>
<div class="a" style="left:646px;top:223px;width:1px;height:448px;background:#d9d9d9"></div>
<div class="a" style="left:710px;top:223px;width:1px;height:448px;background:#d9d9d9"></div>
<div class="a" style="left:774px;top:223px;width:1px;height:448px;background:#d9d9d9"></div>
<div class="a" style="left:838px;top:223px;width:1px;height:448px;background:#d9d9d9"></div>
<div class="a" style="left:902px;top:223px;width:1px;height:448px;background:#d9d9d9"></div>
<div class="a" style="left:950px;top:222px;width:1px;height:449px;background:#ababab"></div>
<div class="a" style="left:26px;top:223px;width:493px;height:42px;background:#6dcf44"></div>
<div class="a" style="left:26px;top:265px;width:390px;height:168px;background:#ffe69e"></div>
<div class="a" style="left:25px;top:264px;width:494px;height:1px;background:#000"></div>
<div class="a" style="left:25px;top:285px;width:494px;height:1px;background:#000"></div>
<div class="a" style="left:25px;top:306px;width:494px;height:1px;background:#000"></div>
<div class="a" style="left:25px;top:327px;width:494px;height:1px;background:#000"></div>
<div class="a" style="left:25px;top:348px;width:494px;height:1px;background:#000"></div>
<div class="a" style="left:25px;top:369px;width:494px;height:1px;background:#000"></div>
<div class="a" style="left:25px;top:390px;width:494px;height:1px;background:#000"></div>
<div class="a" style="left:25px;top:411px;width:494px;height:1px;background:#000"></div>
<div class="a" style="left:25px;top:432px;width:494px;height:1px;background:#000"></div>
<div class="a" style="left:209px;top:222px;width:1px;height:211px;background:#000"></div>
<div class="a" style="left:312px;top:222px;width:1px;height:211px;background:#000"></div>
<div class="a" style="left:415px;top:222px;width:1px;height:211px;background:#000"></div>
<div class="a" style="left:518px;top:222px;width:1px;height:211px;background:#000"></div>
<div class="a" style="left:25px;top:222px;width:1px;height:211px;background:#000"></div>
<div class="cell" style="left:28px;top:236px;font-weight:bold;line-height:16px">Наименование</div>
<div class="cell" style="left:416px;width:103px;text-align:center;top:227px;font-weight:bold;line-height:16px">Сумма,</div>
<div class="cell" style="left:416px;width:103px;text-align:center;top:248px;font-weight:bold;line-height:16px">руб.</div>
<div class="cell" style="left:28px;top:267px;line-height:18px">Стол компьютерный</div>
<div class="cell" style="left:419px;top:267px;width:97px;text-align:right;line-height:18px">11 990</div>
<div class="cell" style="left:28px;top:288px;line-height:18px">Кресло рабочее</div>
<div class="cell" style="left:419px;top:288px;width:97px;text-align:right;line-height:18px">9 980</div>
<div class="cell" style="left:28px;top:309px;line-height:18px">Монитор 24 LED</div>
<div class="cell" style="left:419px;top:309px;width:97px;text-align:right;line-height:18px">14 990</div>
<div class="cell" style="left:28px;top:330px;line-height:18px">Системный блок</div>
<div class="cell" style="left:419px;top:330px;width:97px;text-align:right;line-height:18px">19 990</div>
<div class="cell" style="left:28px;top:351px;line-height:18px">Мышь беспроводная</div>
<div class="cell" style="left:419px;top:351px;width:97px;text-align:right;line-height:18px">2 370</div>
<div class="cell" style="left:28px;top:372px;line-height:18px">Клавиатура проводная</div>
<div class="cell" style="left:419px;top:372px;width:97px;text-align:right;line-height:18px">2 380</div>
<div class="cell" style="left:28px;top:393px;line-height:18px">Сетевой фильтр</div>
<div class="cell" style="left:419px;top:393px;width:97px;text-align:right;line-height:18px">1 780</div>
<div class="cell" style="left:28px;top:414px;line-height:18px">Батарейки ААА</div>
<div class="cell" style="left:419px;top:414px;width:97px;text-align:right;line-height:18px">343</div>
<div class="a" style="left:24px;top:263px;width:187px;height:23px;border:2px solid #027442"></div>
<div class="a" style="left:26px;top:265px;width:183px;height:19px;border:1px solid #fff"></div>
<!-- scrollbars -->
<div class="a" style="left:951px;top:203px;width:17px;height:468px;background:#e6e6e6"></div>
<div class="a" style="left:954px;top:205px;width:14px;height:14px;background:#fff;border:1px solid #c6c6c6"></div>
<svg class="a" style="left:957px;top:209px" width="9" height="5"><path d="M0 5L4.5 0 9 5z" fill="#777"/></svg>
<div class="a" style="left:954px;top:220px;width:14px;height:437px;background:#dadada"></div>
<div class="a" style="left:954px;top:219px;width:14px;height:416px;background:#fff;border:1px solid #c6c6c6"></div>
<div class="a" style="left:954px;top:657px;width:14px;height:14px;background:#fff;border:1px solid #c6c6c6"></div>
<svg class="a" style="left:957px;top:662px" width="9" height="5"><path d="M0 0L4.5 5 9 0z" fill="#777"/></svg>
<!-- sheet tab bar -->
<div class="a" style="left:1px;top:671px;width:967px;height:28px;background:#e6e6e6;border-top:1px solid #ababab"></div>
<svg class="a" style="left:26px;top:680px" width="6" height="10"><path d="M6 0V10L0 5z" fill="#c0c0c0"/></svg>
<svg class="a" style="left:55px;top:680px" width="6" height="10"><path d="M0 0V10L6 5z" fill="#c0c0c0"/></svg>
<div class="a" style="left:100px;top:671px;width:90px;height:25px;background:#fff;border-left:1px solid #ababab;border-bottom:2px solid #027442"></div>
<div class="t" style="left:112.5px;top:677px;font-size:14px;font-weight:bold;color:#027442;line-height:16px;letter-spacing:-0.4px;transform:scaleY(0.95)">microexcel.ru</div>
<svg class="a" style="left:582px;top:679px" width="3" height="16"><circle cx="1.5" cy="2" r="1" fill="#999"/><circle cx="1.5" cy="7" r="1" fill="#999"/><circle cx="1.5" cy="12" r="1" fill="#999"/></svg>
<div class="a" style="left:600px;top:678px;width:351px;height:15px;background:#dadada"></div>
<div class="a" style="left:600px;top:678px;width:303px;height:15px;background:#fff;border:1px solid #c6c6c6"></div>
<div class="a" style="left:600px;top:678px;width:15px;height:15px;background:#fff;border:1px solid #c6c6c6"></div>
<svg class="a" style="left:604px;top:681px" width="5" height="9"><path d="M5 0V9L0 4.5z" fill="#444"/></svg>
<div class="a" style="left:936px;top:678px;width:15px;height:15px;background:#fff;border:1px solid #c6c6c6"></div>
<svg class="a" style="left:941px;top:681px" width="5" height="9"><path d="M0 0V9L5 4.5z" fill="#444"/></svg>

<!-- status -->
<div id="status" class="a"></div>
<div class="t" style="left:8px;top:703px;color:#444">Готово</div>
<svg class="a" style="left:66px;top:703px" width="13" height="13" viewBox="0 0 13 13">
 <circle cx="3" cy="3" r="2.5" fill="#444"/><path d="M6 1.5h7M1 6.5h12v6H1z" fill="none" stroke="#444"/>
 <path d="M3 8.5h1M6 8.5h1M9 8.5h1M3 10.5h1M6 10.5h1M9 10.5h1" stroke="#444"/>
</svg>
<div class="a" style="left:672px;top:700px;width:37px;height:17px;background:#c6c6c6"></div>
<svg class="a" style="left:682px;top:702px" width="14" height="14" viewBox="0 0 14 14"><path d="M0.5 0.5h13v13h-13zM0.5 4.5h13M0.5 9h13M4.5 0.5v13M9 0.5v13" fill="none" stroke="#555"/></svg>
<svg class="a" style="left:721px;top:702px" width="14" height="14" viewBox="0 0 14 14"><path d="M0.5 0.5h13v13h-13z" fill="none" stroke="#555"/><path d="M2.5 2.5h9v9h-9z" fill="none" stroke="#555"/><path d="M4 5h6M4 7h6M4 9h6" stroke="#555"/></svg>
<svg class="a" style="left:760px;top:702px" width="14" height="14" viewBox="0 0 14 14"><path d="M0.5 13.5v-13h13v13M0.5 8.5h13M6.5 0.5v8" fill="none" stroke="#555"/></svg>
<div class="a" style="left:790px;top:708px;width:7px;height:2px;background:#444"></div>
<div class="a" style="left:801px;top:709px;width:100px;height:1px;background:#999"></div>
<div class="a" style="left:849px;top:704px;width:5px;height:11px;background:#555"></div>
<svg class="a" style="left:904px;top:705px" width="9" height="9"><path d="M4.5 0v9M0 4.5h9" stroke="#444" stroke-width="1.6"/></svg>
<div class="t" style="left:922px;top:702px;color:#444">100 %</div>
<svg class="a" style="left:0;top:0" width="969" height="719"><path d="M62 367L117 300" stroke="#f40b0b" stroke-width="6" stroke-linecap="round"/><path d="M135.5 276L100 294.5 113 299.5 126 315z" fill="#f40b0b"/></svg>
<!-- menu -->
<div id="menu" class="a"></div>
<div class="a" style="left:210px;top:272px;width:250px;height:22px;background:#eaeaea"></div>
<div class="a" style="left:185px;top:573px;width:275px;height:26px;background:#c6c6c6"></div>
<div class="mi" style="left:218px;top:229px">В<u>ы</u>резать</div>
<div class="mi" style="left:218px;top:253px"><u>К</u>опировать</div>
<div class="mi" style="left:218px;top:329px">Специальная <u>в</u>ставка...</div>
<div class="mi" style="left:218px;top:355px"><u>И</u>нтеллектуальный поиск</div>
<div class="mi" style="left:218px;top:380px">Встав<u>и</u>ть...</div>
<div class="mi" style="left:218px;top:405px"><u>У</u>далить...</div>
<div class="mi" style="left:218px;top:429px">Очистить содер<u>ж</u>имое</div>
<div class="mi" style="left:218px;top:455px">Перевести</div>
<div class="mi" style="left:218px;top:481px">Экспресс-анали<u>з</u></div>
<div class="mi" style="left:218px;top:505px"><u>Ф</u>ильтр</div>
<div class="mi" style="left:218px;top:529px"><u>С</u>ортировка</div>
<div class="mi" style="left:218px;top:555px"><u>И</u>зменить примечание</div>
<div class="mi" style="left:218px;top:579px;color:#262626">Удалит<u>ь</u> примечание</div>
<div class="mi" style="left:218px;top:603px">П<u>о</u>казать или скрыть примечания</div>
<div class="mi" style="left:218px;top:629px">Формат <u>я</u>чеек...</div>
<div class="mi" style="left:218px;top:653px">Вы<u>б</u>рать из раскрывающегося списка...</div>
<div class="mi" style="left:218px;top:677px">Присвоит<u>ь</u> имя...</div>
<div class="mi" style="left:218px;top:701px">Сс<u>ы</u>лка</div>
<div class="mi" style="left:219px;top:276px;font-weight:bold;color:#444;font-size:11.5px">Параметры вставки:</div>
<div class="a" style="left:218px;top:348px;width:242px;height:1px;background:#e1e1e1"></div>
<div class="a" style="left:218px;top:374px;width:242px;height:1px;background:#e1e1e1"></div>
<div class="a" style="left:218px;top:448px;width:242px;height:1px;background:#e1e1e1"></div>
<div class="a" style="left:218px;top:474px;width:242px;height:1px;background:#e1e1e1"></div>
<div class="a" style="left:218px;top:548px;width:242px;height:1px;background:#e1e1e1"></div>
<div class="a" style="left:218px;top:622px;width:242px;height:1px;background:#e1e1e1"></div>
<svg class="a" style="left:445px;top:507px" width="5" height="9"><path d="M0 0V9L5 4.5z" fill="#666"/></svg>
<svg class="a" style="left:445px;top:531px" width="5" height="9"><path d="M0 0V9L5 4.5z" fill="#666"/></svg>
<div class="a" style="left:185px;top:571px;width:273px;height:30px;border:3px solid #ef1010;border-radius:10px"></div>

<svg class="a" style="left:190px;top:228px" width="16" height="16" viewBox="0 0 16 16">
 <path d="M3.5 0.5l7 10M12.5 0.5l-7 10" stroke="#666" stroke-width="1.5" fill="none"/>
 <circle cx="4" cy="12" r="2.6" fill="none" stroke="#2d8bc9" stroke-width="1.3"/>
 <circle cx="12" cy="12" r="2.6" fill="none" stroke="#2d8bc9" stroke-width="1.3"/>
</svg>
<svg class="a" style="left:190px;top:252px" width="16" height="16" viewBox="0 0 16 16">
 <path d="M0.5 0.5h6l2 2v2M0.5 0.5v10h4" fill="none" stroke="#555"/>
 <path d="M2 3.5h3M2 5.5h3M2 7.5h2" stroke="#2d8bc9"/>
 <path d="M5.5 4.5h6l3 3v7.5h-9z" fill="#fff" stroke="#555"/>
 <path d="M7.5 8.5h5M7.5 10.5h5M7.5 12.5h5" stroke="#2d8bc9"/>
</svg>
<svg class="a" style="left:190px;top:274px" width="17" height="18" viewBox="0 0 17 18">
 <rect x="0.5" y="3" width="11" height="13" rx="1" fill="#f9cf7e"/>
 <path d="M3 2h2a1.5 1.5 0 0 1 3 0h2v3H3z" fill="#737373"/>
 <path d="M7.5 8.5h5l3 3v5.5h-8z" fill="#fff" stroke="#555"/>
</svg>
<svg class="a" style="left:215px;top:297px" width="24" height="25" viewBox="0 0 24 25">
 <rect x="0.5" y="4" width="16" height="19" rx="1" fill="#f9cf7e"/>
 <path d="M2 5.5h1M4 8.5h1M2 11.5h1M4 14.5h1M2 17.5h1M4 20.5h1M6 19h1" stroke="#f0a050"/>
 <path d="M4 3h4a3 3 0 0 1 4 0h4v4H4z" fill="#737373"/>
 <path d="M11.5 11.5h7l4 4v9h-11z" fill="#fff" stroke="#555"/>
</svg>
<svg class="a" style="left:189px;top:352px" width="18" height="18" viewBox="0 0 18 18">
 <circle cx="11" cy="7" r="5.5" fill="none" stroke="#2d8bc9" stroke-width="2"/>
 <path d="M7 11l-5.5 5.5" stroke="#2d8bc9" stroke-width="2.6"/>
 <circle cx="11" cy="4.5" r="1" fill="#444"/><path d="M11 6.5v4" stroke="#444" stroke-width="1.6"/>
</svg>
<svg class="a" style="left:186px;top:448px" width="24" height="52" viewBox="0 0 24 52">
 <path d="M4 7h5.5l-2.5 2.7 2.5 2.8H4z" fill="#1e88d0"/>
 <text x="3.6" y="21.6" font-family="Liberation Sans" font-size="11" fill="#1e88d0">a</text>
 <text x="11.5" y="15" font-family="Liberation Sans" font-size="9.5" fill="#16901e">あ</text>
 <path d="M12 21.3l7-7v7z" fill="#16901e"/>
 <path d="M6.5 1.2L4 6.5h2.5L4.5 11 9 5.5H6.6l2-4.3z" fill="#f8c44c" transform="translate(0 32)"/>
 <path d="M10.8 33.6h8.6v13h-14v-6" fill="none" stroke="#666" stroke-width="1.1"/>
 <path d="M10 37.6h3.5" stroke="#f08a24" stroke-width="1.2"/>
 <path d="M10 40.9h7" stroke="#1e88d0" stroke-width="1.4"/>
 <path d="M10 43.7h5" stroke="#5a8a76" stroke-width="1.2"/>
</svg>
<svg class="a" style="left:186px;top:550px" width="24" height="70" viewBox="0 0 24 70">
 <path d="M7 5.5h10.5a1.2 1.2 0 0 1 1.2 1.2v6.8a1.2 1.2 0 0 1-1.2 1.2H11.5l-3.2 3.3v-3.3H6.2a1.2 1.2 0 0 1-1.2-1.2v-3" fill="none" stroke="#607d78" stroke-width="1.1"/>
 <path d="M5.2 13.2l8.3-8.4" stroke="#1e88d0" stroke-width="2.8"/>
 <path d="M4.6 13.8l0.8-0.8" stroke="#1e88d0" stroke-width="2.8"/>
 <path d="M12 29.5h5.5a1.2 1.2 0 0 1 1.2 1.2v6.8a1.2 1.2 0 0 1-1.2 1.2H11.5l-3.2 3.3v-3.3H6.6a1.2 1.2 0 0 1-1.2-1.2v-3" fill="#fff" stroke="#607d78" stroke-width="1.1"/>
 <path d="M4.5 28.5l7 7M11.5 28.5l-7 7" stroke="#f2954a" stroke-width="1.9"/>
 <path d="M5.5 53.5h12.7v8.8H11.5l-3.2 3.3v-3.3H5.5z" fill="none" stroke="#666" stroke-width="1.1" stroke-dasharray="1.6 1.1"/>
 <path d="M6.5 62.5L18 54.5" stroke="#607d78" stroke-width="1.1"/>
</svg>
<svg class="a" style="left:191px;top:628px" width="14" height="16" viewBox="0 0 14 16">
 <rect x="0" y="0" width="14" height="2" fill="#1e88d0"/>
 <path d="M0.5 1.5h13v14h-13z" fill="#fff" stroke="#555"/>
 <circle cx="4.3" cy="6.5" r="1.2" fill="#666"/><circle cx="4.3" cy="11.5" r="1.1" fill="none" stroke="#666" stroke-width="0.8"/>
 <path d="M7 6.5h4M7 11.5h4" stroke="#555" stroke-width="1.1"/>
</svg>
<svg class="a" style="left:189px;top:699px" width="18" height="19" viewBox="0 0 18 19">
 <path d="M1.5 9.5a6 6 0 0 1 12 0" fill="none" stroke="#666" stroke-width="1.1"/>
 <path d="M2 6.5h11M3 9.5h9M7.5 3.5v6M5 9.5c0-3 1-5 2.5-6M10 9.5c0-3-1-5-2.5-6" fill="none" stroke="#666" stroke-width="1"/>
 <path d="M7.5 12h-3a2.4 2.4 0 0 0 0 4.8h3M9.5 12h3a2.4 2.4 0 0 1 0 4.8h-3M6 14.4h5" fill="none" stroke="#1e88d0" stroke-width="1.9"/>
</svg>

<div id="mini" class="a"></div>
<div class="a" style="left:188px;top:155px;width:64px;height:23px;background:#fff;border:1px solid #c6c6c6"></div>
<div class="t" style="left:191px;top:160px;color:#444;font-size:12.5px">Calibri</div>
<svg class="a" style="left:241px;top:164px" width="7" height="4"><path d="M0 0h7L3.5 4z" fill="#666"/></svg>
<div class="a" style="left:252px;top:155px;width:45px;height:23px;background:#fff;border:1px solid #c6c6c6"></div>
<div class="t" style="left:255px;top:160px;color:#444;font-size:12.5px">12</div>
<svg class="a" style="left:286px;top:164px" width="7" height="4"><path d="M0 0h7L3.5 4z" fill="#666"/></svg>
<div class="t" style="left:304px;top:159px;font-size:14.5px;color:#555;line-height:16px">A</div>
<svg class="a" style="left:311px;top:159px" width="7" height="5"><path d="M0 4.5L3.5 0.5 7 4.5z" fill="#2d8bc9"/></svg>
<div class="t" style="left:327px;top:164px;font-size:10.5px;color:#555;line-height:12px">A</div>
<svg class="a" style="left:333px;top:160px" width="7" height="5"><path d="M0 0.5L3.5 4.5 7 0.5z" fill="#2d8bc9"/></svg>
<svg class="a" style="left:345px;top:159px" width="17" height="17" viewBox="0 0 17 17">
 <rect x="0" y="0" width="16" height="8.5" fill="#1e88d0"/>
 <path d="M2 1.8h12v5H2z" fill="#fff"/>
 <circle cx="7.5" cy="4.3" r="1.8" fill="#1e88d0"/>
 <path d="M2 1.8h2.2L2 4zM14 1.8v2.2L11.8 1.8zM2 6.8V4.6L4.2 6.8zM14 6.8h-2.2L14 4.6z" fill="#1e88d0"/>
 <ellipse cx="13" cy="8.5" rx="3.3" ry="1.4" fill="#f5c04a"/>
 <ellipse cx="13" cy="11" rx="3.3" ry="1.4" fill="#f5c04a"/>
 <ellipse cx="8.5" cy="12.8" rx="3.3" ry="1.4" fill="#f5c04a"/>
 <ellipse cx="8.5" cy="15.3" rx="3.3" ry="1.4" fill="#f5c04a"/>
</svg>
<svg class="a" style="left:366px;top:164px" width="7" height="4"><path d="M0 0h7L3.5 4z" fill="#666"/></svg>
<div class="t" style="left:380px;top:158px;font-size:16px;color:#555;line-height:18px">%</div>
<div class="t" style="left:401px;top:162px;font-size:10px;color:#555;line-height:10px">000</div>
<svg class="a" style="left:423px;top:158px" width="16" height="16" viewBox="0 0 16 16">
 <path d="M0.5 0.5h15v15h-15z" fill="#fff" stroke="#666"/>
 <path d="M0.5 4.5h15M0.5 11.5h15M8 0.5v4M8 11.5v4" stroke="#666"/>
 <path d="M3 8h10M3 8l2-1.7M3 8l2 1.7M13 8l-2-1.7M13 8l-2 1.7" stroke="#2d8bc9" fill="none"/>
</svg>
<div class="t" style="left:192px;top:182px;font-size:14px;font-weight:bold;color:#444;line-height:16px">Ж</div>
<div class="t" style="left:215px;top:182px;font-size:14px;font-weight:bold;font-style:italic;color:#555;line-height:16px">К</div>
<svg class="a" style="left:235px;top:183px" width="15" height="13"><path d="M0 0.5h15M3 4.5h9M0 8.5h15M3 12.5h9" stroke="#555"/></svg>
<svg class="a" style="left:256px;top:181px" width="17" height="17" viewBox="0 0 17 17">
 <path d="M2.2 8.3L8.3 2.3l6.2 5.9-6.4 5.6z" fill="#fff" stroke="#5f7f7a" stroke-width="0.9"/>
 <path d="M6.5 6V2.3a1.5 1.5 0 0 1 3 0V5.5" fill="none" stroke="#555" stroke-width="1.1"/>
 <path d="M13.5 5.5c1.5 0.5 2.5 1.5 2.5 2.5 0 1-0.8 2.5-1.6 4l-0.9-4z" fill="#1e88d0"/>
 <rect x="0" y="13" width="16" height="4" fill="#ffff00"/>
</svg>
<svg class="a" style="left:278px;top:189px" width="7" height="4"><path d="M0 0h7L3.5 4z" fill="#666"/></svg>
<div class="t" style="left:294.5px;top:182px;font-size:14px;font-weight:bold;color:#555;line-height:16px">A</div>
<div class="a" style="left:291px;top:195px;width:16px;height:3.5px;background:#f00"></div>
<svg class="a" style="left:312px;top:189px" width="7" height="4"><path d="M0 0h7L3.5 4z" fill="#666"/></svg>
<svg class="a" style="left:326px;top:183px" width="14" height="14" viewBox="0 0 14 14"><path d="M0.5 0.5h13v13h-13zM7 0.5v13M0.5 7h13" fill="none" stroke="#888" stroke-dasharray="1 1"/><path d="M0 13.5h14" stroke="#555"/></svg>
<svg class="a" style="left:345px;top:189px" width="7" height="4"><path d="M0 0h7L3.5 4z" fill="#666"/></svg>
<svg class="a" style="left:356px;top:182px" width="42" height="18" viewBox="0 0 42 18">
 <text x="9" y="7.3" font-family="Liberation Sans" font-size="9" fill="#444">,0</text>
 <text x="3.5" y="14.8" font-family="Liberation Sans" font-size="9" fill="#444">,00</text>
 <path d="M2.3 5.5h6M2.3 5.5l2.5-2.5M2.3 5.5l2.5 2.5" stroke="#1e88d0" fill="none" stroke-width="1.4"/>
 <text x="25.5" y="7.3" font-family="Liberation Sans" font-size="9" fill="#444">,00</text>
 <text x="30.5" y="14.8" font-family="Liberation Sans" font-size="9" fill="#444">,0</text>
 <path d="M24 12.5h6.2M30.2 12.5l-2.5-2.5M30.2 12.5l-2.5 2.5" stroke="#1e88d0" fill="none" stroke-width="1.4"/>
</svg>
<svg class="a" style="left:402px;top:183px" width="18" height="17" viewBox="0 0 18 17">
 <path d="M11.5 5.5l4.5-4.5" stroke="#666" stroke-width="3"/>
 <path d="M8.3 4.2l4.6 4.6-2 2-4.6-4.6z" fill="#666"/>
 <path d="M6.3 6.2l4.6 4.6-3.4 5.4-6.6-6.6z" fill="#fcd27a"/>
</svg>

<div class="a" style="left:0;top:63px;width:1px;height:656px;background:#027442"></div>
<div class="a" style="left:968px;top:63px;width:1px;height:656px;background:#027442"></div>
<div class="a" style="left:1px;top:717px;width:967px;height:1px;background:#fff"></div>
<div class="a" style="left:0;top:718px;width:969px;height:1px;background:#027442"></div>
</body></html>
